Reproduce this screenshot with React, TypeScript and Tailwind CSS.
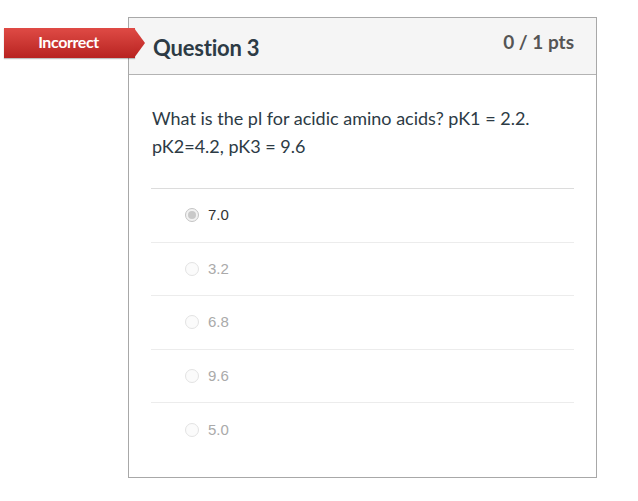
import React from "react";

const answers = [
  { label: "7.0", selected: true },
  { label: "3.2", selected: false },
  { label: "6.8", selected: false },
  { label: "9.6", selected: false },
  { label: "5.0", selected: false },
];

function Radio({ selected }: { selected: boolean }) {
  return (
    <span
      className={`w-[14px] h-[14px] rounded-full border flex items-center justify-center shrink-0 ${
        selected ? "border-[#c4c4c4] bg-[#f2f2f2]" : "border-[#e3e3e3] bg-[#fbfbfb]"
      }`}
    >
      {selected && <span className="w-[8px] h-[8px] rounded-full bg-[#c9c9c9]" />}
    </span>
  );
}

export default function App() {
  return (
    <div className="w-[638px] h-[501px] bg-white relative" style={{ fontFamily: "Lato, 'Open Sans', sans-serif" }}>
      {/* Incorrect ribbon */}
      <div className="absolute left-[4px] top-[28px] flex items-center z-10">
        <div className="h-[30px] w-[131px] bg-gradient-to-b from-[#df4a45] to-[#b82220] flex items-center justify-center shadow-[0_1px_1px_rgba(0,0,0,0.25)]">
          <span className="text-white text-[16px] font-bold tracking-[-0.4px] pr-[2px] -mt-[2px]">Incorrect</span>
        </div>
        <svg width="11" height="30" viewBox="0 0 11 30" className="-ml-px">
          <defs>
            <linearGradient id="rg" x1="0" y1="0" x2="0" y2="1">
              <stop offset="0" stopColor="#df4a45" />
              <stop offset="1" stopColor="#b82220" />
            </linearGradient>
          </defs>
          <polygon points="0,0 11,15 0,30" fill="url(#rg)" />
        </svg>
      </div>

      <div className="pt-[17px] pl-[128px]">
        <div className="w-[469px] h-[461px] border border-[#a8a8a8] flex flex-col">
          <div className="h-[57px] bg-[#f5f5f5] border-b border-[#b3b3b3] flex items-start justify-between pl-[24px] pr-[22px]">
            <h2 className="text-[22px] font-bold text-[#2d3b45] mt-[13px] tracking-[-0.2px]">Question 3</h2>
            <span className="text-[19px] font-bold text-[#555] mt-[10px]">0 / 1 pts</span>
          </div>
          <div className="px-[22px] pt-[29px]">
            <p className="text-[18px] leading-[28px] text-[#2d3b45] pl-[1px]">
              What is the pl for acidic amino acids? pK1 = 2.2.
              <br />
              pK2=4.2, pK3 = 9.6
            </p>
            <div className="mt-[28px] border-t border-[#dcdcdc]">
              {answers.map((a, i) => (
                <div
                  key={a.label}
                  className={`h-[53.5px] flex items-center gap-[9px] pl-[34px] ${
                    i < answers.length - 1 ? "border-b border-[#ececec]" : ""
                  }`}
                >
                  <Radio selected={a.selected} />
                  <span
                    className={`text-[15px] ${a.selected ? "text-[#333]" : "text-[#aaa]"}`}
                    style={{ fontFamily: "'Liberation Sans', Arial, sans-serif" }}
                  >
                    {a.label}
                  </span>
                </div>
              ))}
            </div>
          </div>
        </div>
      </div>
    </div>
  );
}
